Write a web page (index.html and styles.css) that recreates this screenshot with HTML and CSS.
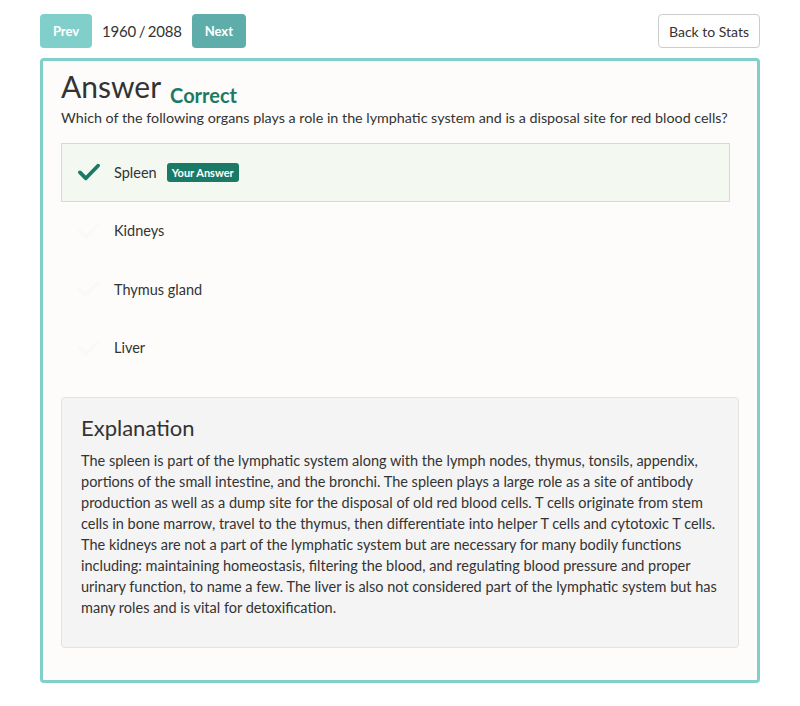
FILE: index.html
```html
<!DOCTYPE html>
<html>
<head>
<meta charset="utf-8">
<link rel="stylesheet" href="styles.css">
</head>
<body>
<div class="page">
  <div class="toolbar">
    <div class="nav">
      <button class="btn btn-prev">Prev</button>
      <span class="count">1960 / 2088</span>
      <button class="btn btn-next">Next</button>
    </div>
    <button class="btn-back">Back to Stats</button>
  </div>
  <div class="card">
    <div class="title-row">
      <h1 class="title">Answer</h1>
      <span class="status">Correct</span>
    </div>
    <p class="question">Which of the following organs plays a role in the lymphatic system and is a disposal site for red blood cells?</p>
    <ul class="options">
      <li class="option selected">
        <svg class="check" viewBox="0 0 24 20" width="22" height="18"><path d="M2 10.5 L8.5 17 L22 3" fill="none" stroke="currentColor" stroke-width="4.2" stroke-linecap="round" stroke-linejoin="round"/></svg>
        <span class="label">Spleen</span>
        <span class="badge">Your Answer</span>
      </li>
      <li class="option">
        <svg class="check faint" viewBox="0 0 24 20" width="22" height="18"><path d="M2 10.5 L8.5 17 L22 3" fill="none" stroke="currentColor" stroke-width="4.2" stroke-linecap="round" stroke-linejoin="round"/></svg>
        <span class="label">Kidneys</span>
      </li>
      <li class="option">
        <svg class="check faint" viewBox="0 0 24 20" width="22" height="18"><path d="M2 10.5 L8.5 17 L22 3" fill="none" stroke="currentColor" stroke-width="4.2" stroke-linecap="round" stroke-linejoin="round"/></svg>
        <span class="label">Thymus gland</span>
      </li>
      <li class="option">
        <svg class="check faint" viewBox="0 0 24 20" width="22" height="18"><path d="M2 10.5 L8.5 17 L22 3" fill="none" stroke="currentColor" stroke-width="4.2" stroke-linecap="round" stroke-linejoin="round"/></svg>
        <span class="label">Liver</span>
      </li>
    </ul>
    <div class="explanation">
      <h2 class="exp-title">Explanation</h2>
      <p class="exp-text">The spleen is part of the lymphatic system along with the lymph nodes, thymus, tonsils, appendix, portions of the small intestine, and the bronchi. The spleen plays a large role as a site of antibody production as well as a dump site for the disposal of old red blood cells. T cells originate from stem cells in bone marrow, travel to the thymus, then differentiate into helper T cells and cytotoxic T cells. The kidneys are not a part of the lymphatic system but are necessary for many bodily functions including: maintaining homeostasis, filtering the blood, and regulating blood pressure and proper urinary function, to name a few. The liver is also not considered part of the lymphatic system but has many roles and is vital for detoxification.</p>
    </div>
  </div>
</div>
</body>
</html>
```

FILE: styles.css
```css
* { box-sizing: border-box; }
body {
  margin: 0;
  background: #ffffff;
  font-family: Lato, "Open Sans", sans-serif;
  color: #333333;
}
.page {
  width: 720px;
  margin: 0 0 0 40px;
  padding-top: 14px;
}
.toolbar {
  display: flex;
  justify-content: space-between;
  align-items: center;
  height: 34px;
}
.nav {
  display: flex;
  align-items: center;
}
.btn {
  height: 34px;
  border: none;
  border-radius: 4px;
  color: #ffffff;
  font-family: Lato, sans-serif;
  font-weight: 700;
  font-size: 13px;
  padding: 0;
}
.btn-prev {
  width: 52px;
  background: #80cfcb;
}
.btn-next {
  width: 54px;
  background: #5fadaa;
}
.count {
  font-size: 15px;
  letter-spacing: -0.2px;
  word-spacing: -1px;
  color: #333;
  margin: 0 10px;
  white-space: nowrap;
}
.btn-back {
  width: 102px;
  height: 34px;
  background: #fff;
  border: 1px solid #cccccc;
  border-radius: 4px;
  font-family: Lato, sans-serif;
  font-size: 14px;
  color: #333;
  padding: 0;
}
.card {
  margin-top: 10px;
  border: 3px solid #80cfcb;
  border-radius: 4px;
  background: #fdfcfa;
  padding: 6px 18px 30px 18px;
}
.title-row {
  display: flex;
  align-items: baseline;
  height: 38px;
}
.title {
  margin: 0;
  font-size: 30px;
  font-weight: 400;
  color: #333;
  line-height: 38px;
}
.status {
  margin-left: 9px;
  font-size: 20px;
  font-weight: 700;
  color: #1a7a66;
  position: relative;
  top: 5px;
}
.question {
  margin: 3px 0 15px 0;
  font-size: 14.3px;
  line-height: 20px;
  color: #333;
}
.options {
  list-style: none;
  margin: 0;
  padding: 0;
  width: 669px;
}
.option {
  display: flex;
  align-items: center;
  height: 58.5px;
  padding-left: 16px;
  border: 1px solid transparent;
  font-size: 14.5px;
  color: #333;
}
.option.selected {
  background: #f3f9f1;
  border-color: #c9e4c4;
}
.check {
  color: #1a7a66;
  flex: none;
}
.check.faint {
  color: #faf9f7;
}
.label {
  margin-left: 14px;
}
.badge {
  margin-left: 10px;
  background: #1a7a66;
  color: #fff;
  font-size: 11px;
  font-weight: 700;
  padding: 3px 5px;
  border-radius: 3px;
  line-height: 13px;
}
.explanation {
  margin-top: 20px;
  background: #f4f4f4;
  border: 1px solid #e3e3e3;
  border-radius: 4px;
  padding: 16px 19px 29px 19px;
}
.exp-title {
  margin: 0 0 8px 0;
  font-size: 22px;
  font-weight: 400;
  color: #333;
  line-height: 28px;
}
.exp-text {
  margin: 0;
  font-size: 14.5px;
  line-height: 21px;
  color: #333;
}
.card::after {
  content: "";
  display: block;
  height: 2px;
}
```
